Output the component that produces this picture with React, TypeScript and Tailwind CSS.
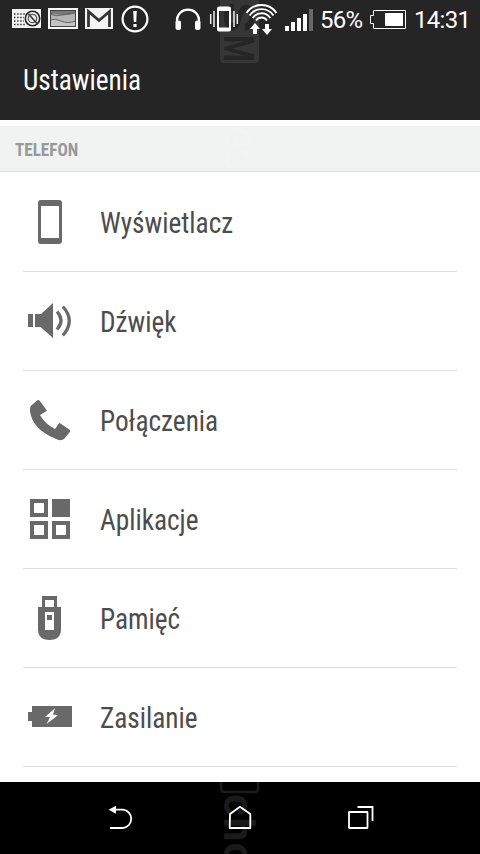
import type { ReactNode } from 'react';

function StatusBar() {
  return (
    <div className="relative z-10 flex h-10 items-start pl-3 text-white">
      {/* Radio */}
      <svg className="h-10 w-[29px]" viewBox="12 0 29 40">
        <rect x="12" y="9" width="29" height="19" fill="#f4f4f4" />
        <path d="M14 14H25M14 17.500H24M14 21H24M14 24.500H26" stroke="#252525" strokeWidth="1.400" strokeDasharray="1.4 1.7" />
        <circle cx="32.5" cy="18.5" r="7.2" fill="#f4f4f4" stroke="#252525" strokeWidth="1.6" />
        <circle cx="32.5" cy="18.5" r="4.2" fill="none" stroke="#555" strokeWidth="1.3" />
        <path d="M28.5 14l8.5 9.5" stroke="#333" strokeWidth="1.6" />
      </svg>

      {/* Weather wallpaper */}
      <svg className="ml-[7px] h-10 w-[30px]" viewBox="48 0 30 40">
        <rect x="48" y="8" width="30" height="21" fill="#f8f8f8" />
        <rect x="50" y="10" width="26" height="17" fill="#b4b4b4" />
        <path d="M50 10h26v3q-8 3-14 2t-12-1z" fill="#777" />
        <path d="M50 20q5-2 11 1t15 0v6H50z" fill="#c4c4c4" />
        <path d="M50 14q6 3 12 1t14-2M50 20q5-2 11 1t15 0" fill="none" stroke="#666" strokeWidth="1" />
        <rect x="50.5" y="10.5" width="25" height="16" fill="none" stroke="#444" strokeWidth="1" />
      </svg>

      {/* Gmail */}
      <svg className="ml-[7px] h-10 w-7" viewBox="85 0 28 40">
        <rect x="85" y="8" width="28" height="21" fill="#f4f4f4" />
        <path d="M88.500 27V11.500L99 20.500L109.500 11.500V27" fill="none" stroke="#333" strokeWidth="2.800" />
      </svg>

      {/* Alert */}
      <svg className="ml-2 h-10 w-7" viewBox="121 0 28 40">
        <circle cx="135" cy="19" r="12.4" fill="none" stroke="#fff" strokeWidth="2.2" />
        <path d="M133.200 11h3.600l-.6 11h-2.400z" fill="#fff" />
        <rect x="133.400" y="24" width="3.200" height="3" fill="#fff" />
      </svg>

      {/* Headphones */}
      <svg className="ml-[25px] h-10 w-[28px]" viewBox="174 0 28 40">
        <path d="M177 23V20a11 10.300 0 0 1 22 0V23" fill="none" stroke="#fff" strokeWidth="2.300" />
        <rect x="175.500" y="20.500" width="5.500" height="9.500" rx="2" fill="#fff" />
        <rect x="195" y="20.500" width="5.500" height="9.500" rx="2" fill="#fff" />
      </svg>

      {/* Vibrate */}
      <svg className="ml-[7px] h-10 w-[30px]" viewBox="209 0 30 40">
        <path d="M210.700 14v10M214 11v16M234 11v16M237.300 14v10" stroke="#eee" strokeWidth="1.500" />
        <path
          fillRule="evenodd"
          d="M219 6.500h10q2 0 2 2v21q0 2-2 2h-10q-2 0-2-2v-21q0-2 2-2zM219 11v16.500h10v-16.500z"
          fill="#fff"
        />
      </svg>

      {/* Wi-Fi */}
      <svg className="ml-[6px] h-10 w-[34px]" viewBox="245 0 34 40">
        <g fill="none" stroke="#fff" strokeWidth="1.900">
          <path d="M246.500 13a18 18 0 0 1 30 0" />
          <path d="M249.500 15.500a14.500 14.500 0 0 1 24 0" />
          <path d="M252.700 18a10.600 10.600 0 0 1 17.600 0" />
          <path d="M256 20.500a6.600 6.600 0 0 1 11 0" />
        </g>
        <path d="M255 23l5 6h-3v5h-4v-5h-3zM265 24h4v5h3l-5 6-5-6h3z" fill="#fff" />
      </svg>

      {/* Signal */}
      <svg className="ml-[6px] h-10 w-7" viewBox="285 0 28 40">
        <path d="M285 26h4v5h-4zM291 22h4v9h-4zM297 18h4v13h-4zM303 14h4v17h-4z" fill="#fff" />
        <path d="M309 9h4v22h-4z" fill="#686868" />
      </svg>

      <span className="ml-[7px] w-[50px] whitespace-nowrap text-[24px] leading-10 tracking-[-0.7px]">56%</span>

      {/* Battery */}
      <svg className="h-10 w-[36px]" viewBox="370 0 36 40">
        <path d="M373.500 10.500H405.500V28.500H373.500V23.500H370.500V15.500H373.500z" fill="none" stroke="#fff" />
        <rect x="385" y="13" width="18" height="13" fill="#fff" />
      </svg>

      <span className="ml-[8px] whitespace-nowrap text-[24px] leading-10 tracking-[-0.7px]">14:31</span>
    </div>
  );
}

function Icon({ children }: { children: ReactNode }) {
  return (
    <svg className="size-12 shrink-0" viewBox="0 0 48 48" fill="#696969">
      {children}
    </svg>
  );
}

const items = [
  {
    label: 'Wyświetlacz',
    icon: <path fillRule="evenodd" d="M15 2h18q3 0 3 3v38q0 3-3 3H15q-3 0-3-3V5q0-3 3-3zM15 8v32h18V8z" />,
  },
  {
    label: 'Dźwięk',
    icon: (
      <>
        <path d="M2 17h5v13H2zM9 17h6L27 6v35L14.500 30H9z" />
        <path d="M31 14.500q8 9 0 18M36.800 9.500q13 14 0 29" fill="none" stroke="#696969" strokeWidth="3.200" />
      </>
    ),
  },
  {
    label: 'Połączenia',
    icon: (
      <path d="M11 4.600q1.300-1.200 2.500 0L21 14.700 14 19Q19 28 29 33l4.300-6.300L44 34q.5 1 0 1.800L38 43q-3.500 2.500-9-.5Q6 33 4 15 3.600 11 5 9.800z" />
    ),
  },
  {
    label: 'Aplikacje',
    icon: (
      <path
        fillRule="evenodd"
        d="M4 4h18v18H4zM8 8v10h10V8zM26 4h18v18H26zM4 26h18v18H4zM8 30v10h10V30zM26 26h18v18H26zM30 30v10h10V30z"
      />
    ),
  },
  {
    label: 'Pamięć',
    icon: (
      <>
        <path
          fillRule="evenodd"
          d="M16 2h15v11h4v22q0 11-11.500 11T12 35V13h4zM19 6v7h9V6zM19 18v18h9V18z"
        />
        <path d="M21 21h5v5h-5z" />
      </>
    ),
  },
  {
    label: 'Zasilanie',
    icon: (
      <>
        <path d="M6 13h40v21H6v-6H2v-9h4z" />
        <path d="M29 15.300L19 24h5l-3.500 7L32 22.300l-5-.8z" fill="#fff" />
      </>
    ),
  },
];

function Watermark() {
  return (
    <svg className="pointer-events-none absolute inset-0 h-full w-full" viewBox="0 0 480 854" fontWeight="700">
      <rect x="220" y="-40" width="39" height="103" rx="4" fill="#363636" />
      <text transform="translate(224 35) rotate(90)" fontSize="43" fill="#252525" textLength="27" lengthAdjust="spacingAndGlyphs">M</text>
      <text transform="translate(224 2) rotate(90)" fontSize="43" fill="#252525" textLength="30" lengthAdjust="spacingAndGlyphs">S</text>
      <text transform="translate(224 126) rotate(90)" fontSize="36" fill="#f2f4f3" textLength="44">GS</text>
      <path d="M221 782v7q0 3 3 3h31q3 0 3-3v-7" fill="none" stroke="#1a1a1a" strokeWidth="2.500" />
      <text transform="translate(224 794) rotate(90)" fontSize="43" letterSpacing="1" fill="#1a1a1a">cho</text>
    </svg>
  );
}

export default function App() {
  return (
    <div className="relative flex h-[854px] w-[480px] flex-col overflow-hidden bg-white font-['Roboto',sans-serif]">
      <div className="h-[120px] shrink-0 bg-[#252525]">
        <StatusBar />
        <h1 className="flex h-20 items-center pl-[23px] pt-[2px] font-['Roboto_Condensed',Roboto,sans-serif] text-[29px] font-[450] text-white">
          <span className="origin-left scale-x-[0.94]">Ustawienia</span>
        </h1>
      </div>

      <div className="mt-[6px] flex h-[46px] shrink-0 items-center border-b border-[#dce0df] bg-[#f0f3f2] pl-[15px] pt-[2px] font-['Roboto_Condensed',Roboto,sans-serif] text-[18px] font-bold text-[#999]">
        <span className="origin-left scale-x-[0.95]">TELEFON</span>
      </div>

      <ul className="mx-[23px] flex-1 pt-px">
        {items.map((item) => (
          <li key={item.label} className="flex h-[99px] items-center gap-[26px] border-b border-[#dedede] pl-[3px]">
            <Icon>{item.icon}</Icon>
            <span className="origin-left scale-x-[0.94] pt-[4px] font-['Roboto_Condensed',Roboto,sans-serif] text-[29px] font-[450] text-[#4c4c4c]">
              {item.label}
            </span>
          </li>
        ))}
      </ul>

      <nav className="relative z-10 flex h-[72px] shrink-0 items-center justify-center gap-[80px]">
        <svg className="size-10" viewBox="100 798 40 40" fill="none" stroke="#fff" strokeWidth="1.800">
          <path d="M110 828h13a9.200 9.200 0 0 0 0-18.300h-9" />
          <path d="M108.500 809.700l7.500-4v8z" fill="#fff" stroke="none" />
        </svg>
        <svg className="size-10" viewBox="220 798 40 40" fill="none" stroke="#fff" strokeWidth="1.800">
          <path d="M230 814l10-7.300 10.300 7.300v14h-20.600z" strokeLinejoin="round" />
        </svg>
        <svg className="size-10" viewBox="340 798 40 40" fill="none" stroke="#fff" strokeWidth="1.800">
          <rect x="349" y="812" width="18.500" height="16" rx=".5" />
          <path d="M357.500 807h15v14" />
        </svg>
      </nav>

      <div className="absolute inset-x-0 bottom-0 h-[72px] bg-black" />
      <Watermark />
    </div>
  );
}
